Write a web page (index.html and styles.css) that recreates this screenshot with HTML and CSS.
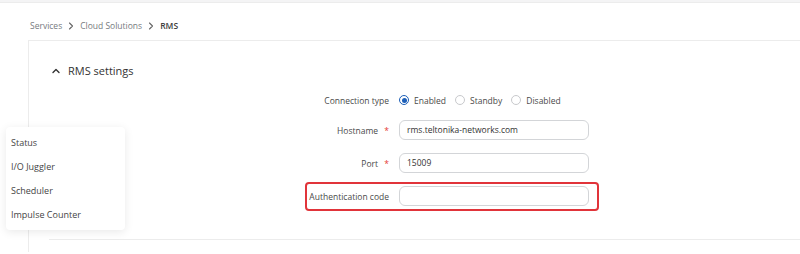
FILE: index.html
```html
<!DOCTYPE html>
<html lang="en">
<head>
    <meta charset="UTF-8">
    <title>RMS - Cloud Solutions</title>
    <link rel="stylesheet" href="styles.css">
</head>
<body>
    <div class="topbar"></div>

    <nav class="breadcrumb">
        <span>Services</span>
        <svg class="sep" width="6" height="8" viewBox="0 0 6 8"><path d="M1.5 1 L4.5 4 L1.5 7" fill="none" stroke="#666" stroke-width="1.1" stroke-linecap="round" stroke-linejoin="round"/></svg>
        <span>Cloud Solutions</span>
        <svg class="sep" width="6" height="8" viewBox="0 0 6 8"><path d="M1.5 1 L4.5 4 L1.5 7" fill="none" stroke="#666" stroke-width="1.1" stroke-linecap="round" stroke-linejoin="round"/></svg>
        <span class="current">RMS</span>
    </nav>

    <div class="card">
        <div class="card-header">
            <svg class="chevron" width="8" height="6" viewBox="0 0 8 6">
                <path d="M1 4.5 L4 1.5 L7 4.5" fill="none" stroke="#333" stroke-width="1.4" stroke-linecap="round" stroke-linejoin="round"/>
            </svg>
            <h2>RMS settings</h2>
        </div>

        <div class="form">
            <div class="row row-radio">
                <label class="label">Connection type</label>
                <div class="radios">
                    <span class="radio checked"></span><span class="radio-text">Enabled</span>
                    <span class="radio"></span><span class="radio-text">Standby</span>
                    <span class="radio"></span><span class="radio-text">Disabled</span>
                </div>
            </div>
            <div class="row">
                <label class="label">Hostname <span class="req">*</span></label>
                <div class="input">rms.teltonika-networks.com</div>
            </div>
            <div class="row">
                <label class="label">Port <span class="req">*</span></label>
                <div class="input">15009</div>
            </div>
            <div class="row highlight">
                <label class="label">Authentication code</label>
                <div class="input"></div>
            </div>
        </div>

        <div class="divider"></div>
    </div>

    <ul class="menu">
        <li>Status</li>
        <li>I/O Juggler</li>
        <li>Scheduler</li>
        <li>Impulse Counter</li>
    </ul>
</body>
</html>
```

FILE: styles.css
```css
* {
    margin: 0;
    padding: 0;
    box-sizing: border-box;
}

body {
    font-family: "Open Sans", "Noto Sans", sans-serif;
    font-size: 8.5px;
    color: #404040;
    background: #ffffff;
    position: relative;
    height: 254px;
    overflow: hidden;
}

.topbar {
    height: 3px;
    background: #f4f4f5;
    border-bottom: 1px solid #ececec;
}

.breadcrumb {
    margin: 16px 0 0 30px;
    height: 13px;
    line-height: 13px;
    color: #777b80;
    display: flex;
    align-items: center;
    gap: 6px;
}

.breadcrumb .current {
    color: #404040;
    font-weight: 600;
}

.card {
    margin: 8px 0 0 28px;
    border: 1px solid #ececec;
    border-right: none;
    border-bottom: none;
    height: 212px;
}

.card-header {
    display: flex;
    align-items: center;
    gap: 8px;
    padding: 22px 0 0 23px;
    height: 38px;
}

.card-header h2 {
    font-size: 11px;
    font-weight: 500;
    color: #333;
    line-height: 16px;
}

.form {
    margin: 11px 0 0 220px;
    width: 340px;
}

.row {
    display: flex;
    align-items: center;
    height: 20px;
    margin-bottom: 13px;
    position: relative;
}

.row-radio {
    margin-bottom: 10px;
}

.label {
    width: 150px;
    text-align: right;
    padding-right: 10px;
    color: #4a4a4a;
}

.req {
    color: #e53935;
    margin-left: 4px;
}

.input {
    width: 190px;
    height: 20px;
    border: 1px solid #d3d5d8;
    border-radius: 6px;
    padding-left: 7px;
    line-height: 18px;
    color: #333;
}

.radios {
    display: flex;
    align-items: center;
}

.radio {
    width: 10px;
    height: 10px;
    border: 1px solid #c8c9cc;
    border-radius: 50%;
    margin-right: 5px;
    position: relative;
}

.radio.checked {
    border-color: #1d5fb8;
}

.radio.checked::after {
    content: "";
    position: absolute;
    left: 1.5px;
    top: 1.5px;
    width: 5px;
    height: 5px;
    border-radius: 50%;
    background: #1d5fb8;
}

.radio-text {
    margin-right: 9px;
    color: #4a4a4a;
}

.highlight::after {
    content: "";
    position: absolute;
    left: 56px;
    right: -10px;
    top: -4px;
    bottom: -5px;
    border: 2px solid #e1343a;
    border-radius: 4px;
}

.divider {
    margin: 33px 0 0 20px;
    border-top: 1px solid #ececec;
}

.menu {
    list-style: none;
    position: absolute;
    left: 6px;
    top: 127px;
    width: 119px;
    height: 103px;
    background: #fff;
    border-radius: 4px;
    box-shadow: 0 2px 10px rgba(0, 0, 0, 0.09);
    padding-top: 4px;
    font-size: 9px;
    color: #444;
}

.menu li {
    height: 24px;
    line-height: 24px;
    padding-left: 5px;
}
```
